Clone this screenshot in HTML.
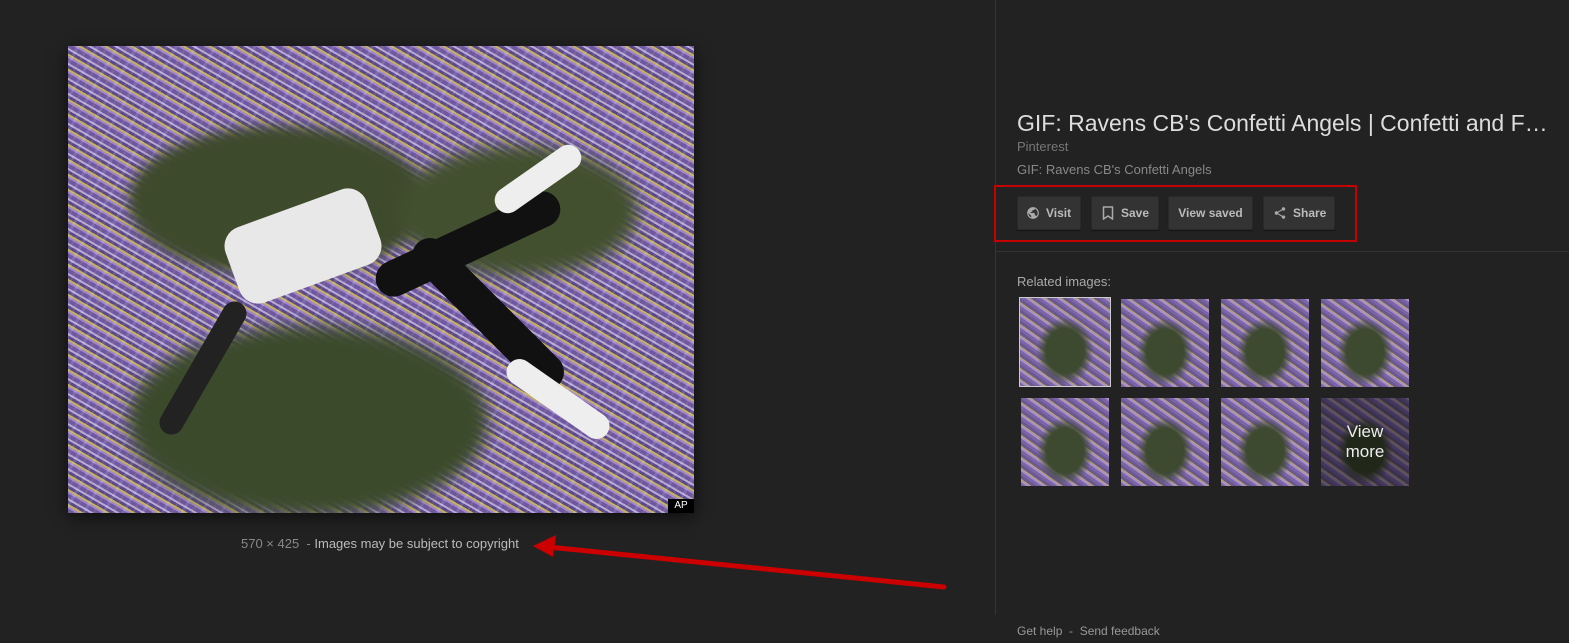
<html><head><style>
body{margin:0;width:1569px;height:643px;background:#222;font-family:"Liberation Sans",Arial,sans-serif;position:relative;overflow:hidden}
.a{position:absolute}
.btn{position:absolute;top:196px;height:32px;background:#333;border:1px solid #2a2a2a;border-radius:2px;color:#bbb;font-size:12px;font-weight:bold;line-height:32px;box-shadow:0 1px 1px rgba(0,0,0,.4)}
.th{position:absolute;width:88px;height:88px;background:radial-gradient(ellipse at 50% 60%,#3d4a2f 0 30%,transparent 45%),repeating-linear-gradient(35deg,#7b64a8 0 3px,#a890c8 3px 5px,#b9a460 5px 6px,#6a5890 6px 9px),repeating-linear-gradient(-50deg,rgba(255,255,255,.15) 0 2px,transparent 2px 6px)}
.conf{background:
repeating-linear-gradient(30deg,#6f58a2 0 4px,#9f86cc 4px 6px,#c4b060 6px 8px,#5b4a8a 8px 11px,#b8a8d8 11px 13px),
#6f58a2}
</style></head><body>
<div class="a conf" style="left:68px;top:46px;width:626px;height:467px;box-shadow:0 4px 16px rgba(0,0,0,.6);overflow:hidden">
<div class="a" style="left:0;top:0;width:626px;height:467px;background:repeating-linear-gradient(-60deg,rgba(255,255,255,.12) 0 3px,transparent 3px 9px,rgba(200,180,80,.15) 9px 11px,transparent 11px 17px)"></div>
<div class="a" style="left:60px;top:80px;width:300px;height:150px;border-radius:50%;background:#3e4a2c;filter:blur(6px)"></div>
<div class="a" style="left:60px;top:280px;width:360px;height:190px;border-radius:50%;background:#3b4a2b;filter:blur(8px)"></div>
<div class="a" style="left:330px;top:100px;width:240px;height:130px;border-radius:50%;background:#42502f;filter:blur(8px)"></div>
<div class="a" style="left:160px;top:160px;width:150px;height:80px;background:#e8e8e8;transform:rotate(-20deg);border-radius:20px"></div>
<div class="a" style="left:300px;top:180px;width:200px;height:36px;background:#111;transform:rotate(-25deg);border-radius:18px"></div>
<div class="a" style="left:320px;top:250px;width:200px;height:36px;background:#111;transform:rotate(45deg);border-radius:18px"></div>
<div class="a" style="left:430px;top:340px;width:120px;height:26px;background:#eee;transform:rotate(35deg);border-radius:13px"></div>
<div class="a" style="left:420px;top:120px;width:100px;height:26px;background:#eee;transform:rotate(-35deg);border-radius:13px"></div>
<div class="a" style="left:60px;top:310px;width:150px;height:24px;background:#222;transform:rotate(-60deg);border-radius:12px"></div>
<div class="a" style="left:600px;top:453px;width:26px;height:14px;background:#000;color:#fff;font-size:10px;text-align:center;line-height:14px">AP</div>
</div>
<div class="a" style="left:241px;top:536px;font-size:13px;color:#888;white-space:nowrap">570 × 425 &nbsp;- <span style="color:#bbb">Images may be subject to copyright</span></div>
<svg class="a" style="left:0;top:0" width="1569" height="643"><path d="M944 587 L548 547" stroke="#c00" stroke-width="5" stroke-linecap="round"/><path d="M533 546 L556 535 L553 557Z" fill="#c00"/></svg>
<div class="a" style="left:995px;top:0;width:1px;height:615px;background:#333"></div>
<div class="a" style="left:996px;top:251px;width:573px;height:1px;background:#333"></div>
<div class="a" style="left:1017px;top:110px;font-size:23px;color:#ddd;white-space:nowrap">GIF: Ravens CB's Confetti Angels | Confetti and F…</div>
<div class="a" style="left:1017px;top:139px;font-size:13px;color:#777">Pinterest</div>
<div class="a" style="left:1017px;top:162px;font-size:13px;color:#888">GIF: Ravens CB's Confetti Angels</div>
<div class="a" style="left:994px;top:185px;width:359px;height:53px;border:2px solid #c40000"></div>
<div class="btn" style="left:1017px;width:62px"><svg class="a" style="left:8px;top:9px" width="14" height="14" viewBox="0 0 24 24"><path fill="#aaa" d="M12 2a10 10 0 100 20 10 10 0 000-20zm-1 17.9A8 8 0 014 12l5 5v1a2 2 0 002 2zm6.9-2.5A2 2 0 0016 16h-1v-3a1 1 0 00-1-1H8v-2h2a1 1 0 001-1V7h2a2 2 0 002-2v-.4a8 8 0 012.9 12.8z"/></svg><span style="margin-left:28px">Visit</span></div>
<div class="btn" style="left:1091px;width:66px"><svg class="a" style="left:10px;top:9px" width="12" height="14" viewBox="0 0 12 14"><path d="M1.5 1h9v12l-4.5-3-4.5 3z" fill="none" stroke="#aaa" stroke-width="1.5"/></svg><span style="margin-left:29px">Save</span></div>
<div class="btn" style="left:1168px;width:83px;text-align:center">View saved</div>
<div class="btn" style="left:1263px;width:70px"><svg class="a" style="left:9px;top:9px" width="14" height="14" viewBox="0 0 24 24"><path fill="#aaa" d="M18 16a3 3 0 00-2 .8L8.9 12.7a3 3 0 000-1.4L16 7.2A3 3 0 1015 5a3 3 0 000 .7L8 9.8a3 3 0 100 4.4l7.1 4.2a3 3 0 102.9-2.4z"/></svg><span style="margin-left:29px">Share</span></div>
<div class="a" style="left:1017px;top:274px;font-size:13px;color:#aaa">Related images:</div>
<div class="th" style="left:1019px;top:297px;width:90px;height:88px;border:1px solid #ccc"></div>
<div class="th" style="left:1121px;top:299px"></div>
<div class="th" style="left:1221px;top:299px"></div>
<div class="th" style="left:1321px;top:299px"></div>
<div class="th" style="left:1021px;top:398px"></div>
<div class="th" style="left:1121px;top:398px"></div>
<div class="th" style="left:1221px;top:398px"></div>
<div class="th" style="left:1321px;top:398px"><div style="width:88px;height:88px;background:rgba(0,0,0,.45);color:#eee;font-size:17px;text-align:center;padding-top:24px;box-sizing:border-box;line-height:20px">View<br>more</div></div>
<div class="a" style="left:1017px;top:624px;font-size:12px;color:#999">Get help &nbsp;- &nbsp;Send feedback</div>
</body></html>
